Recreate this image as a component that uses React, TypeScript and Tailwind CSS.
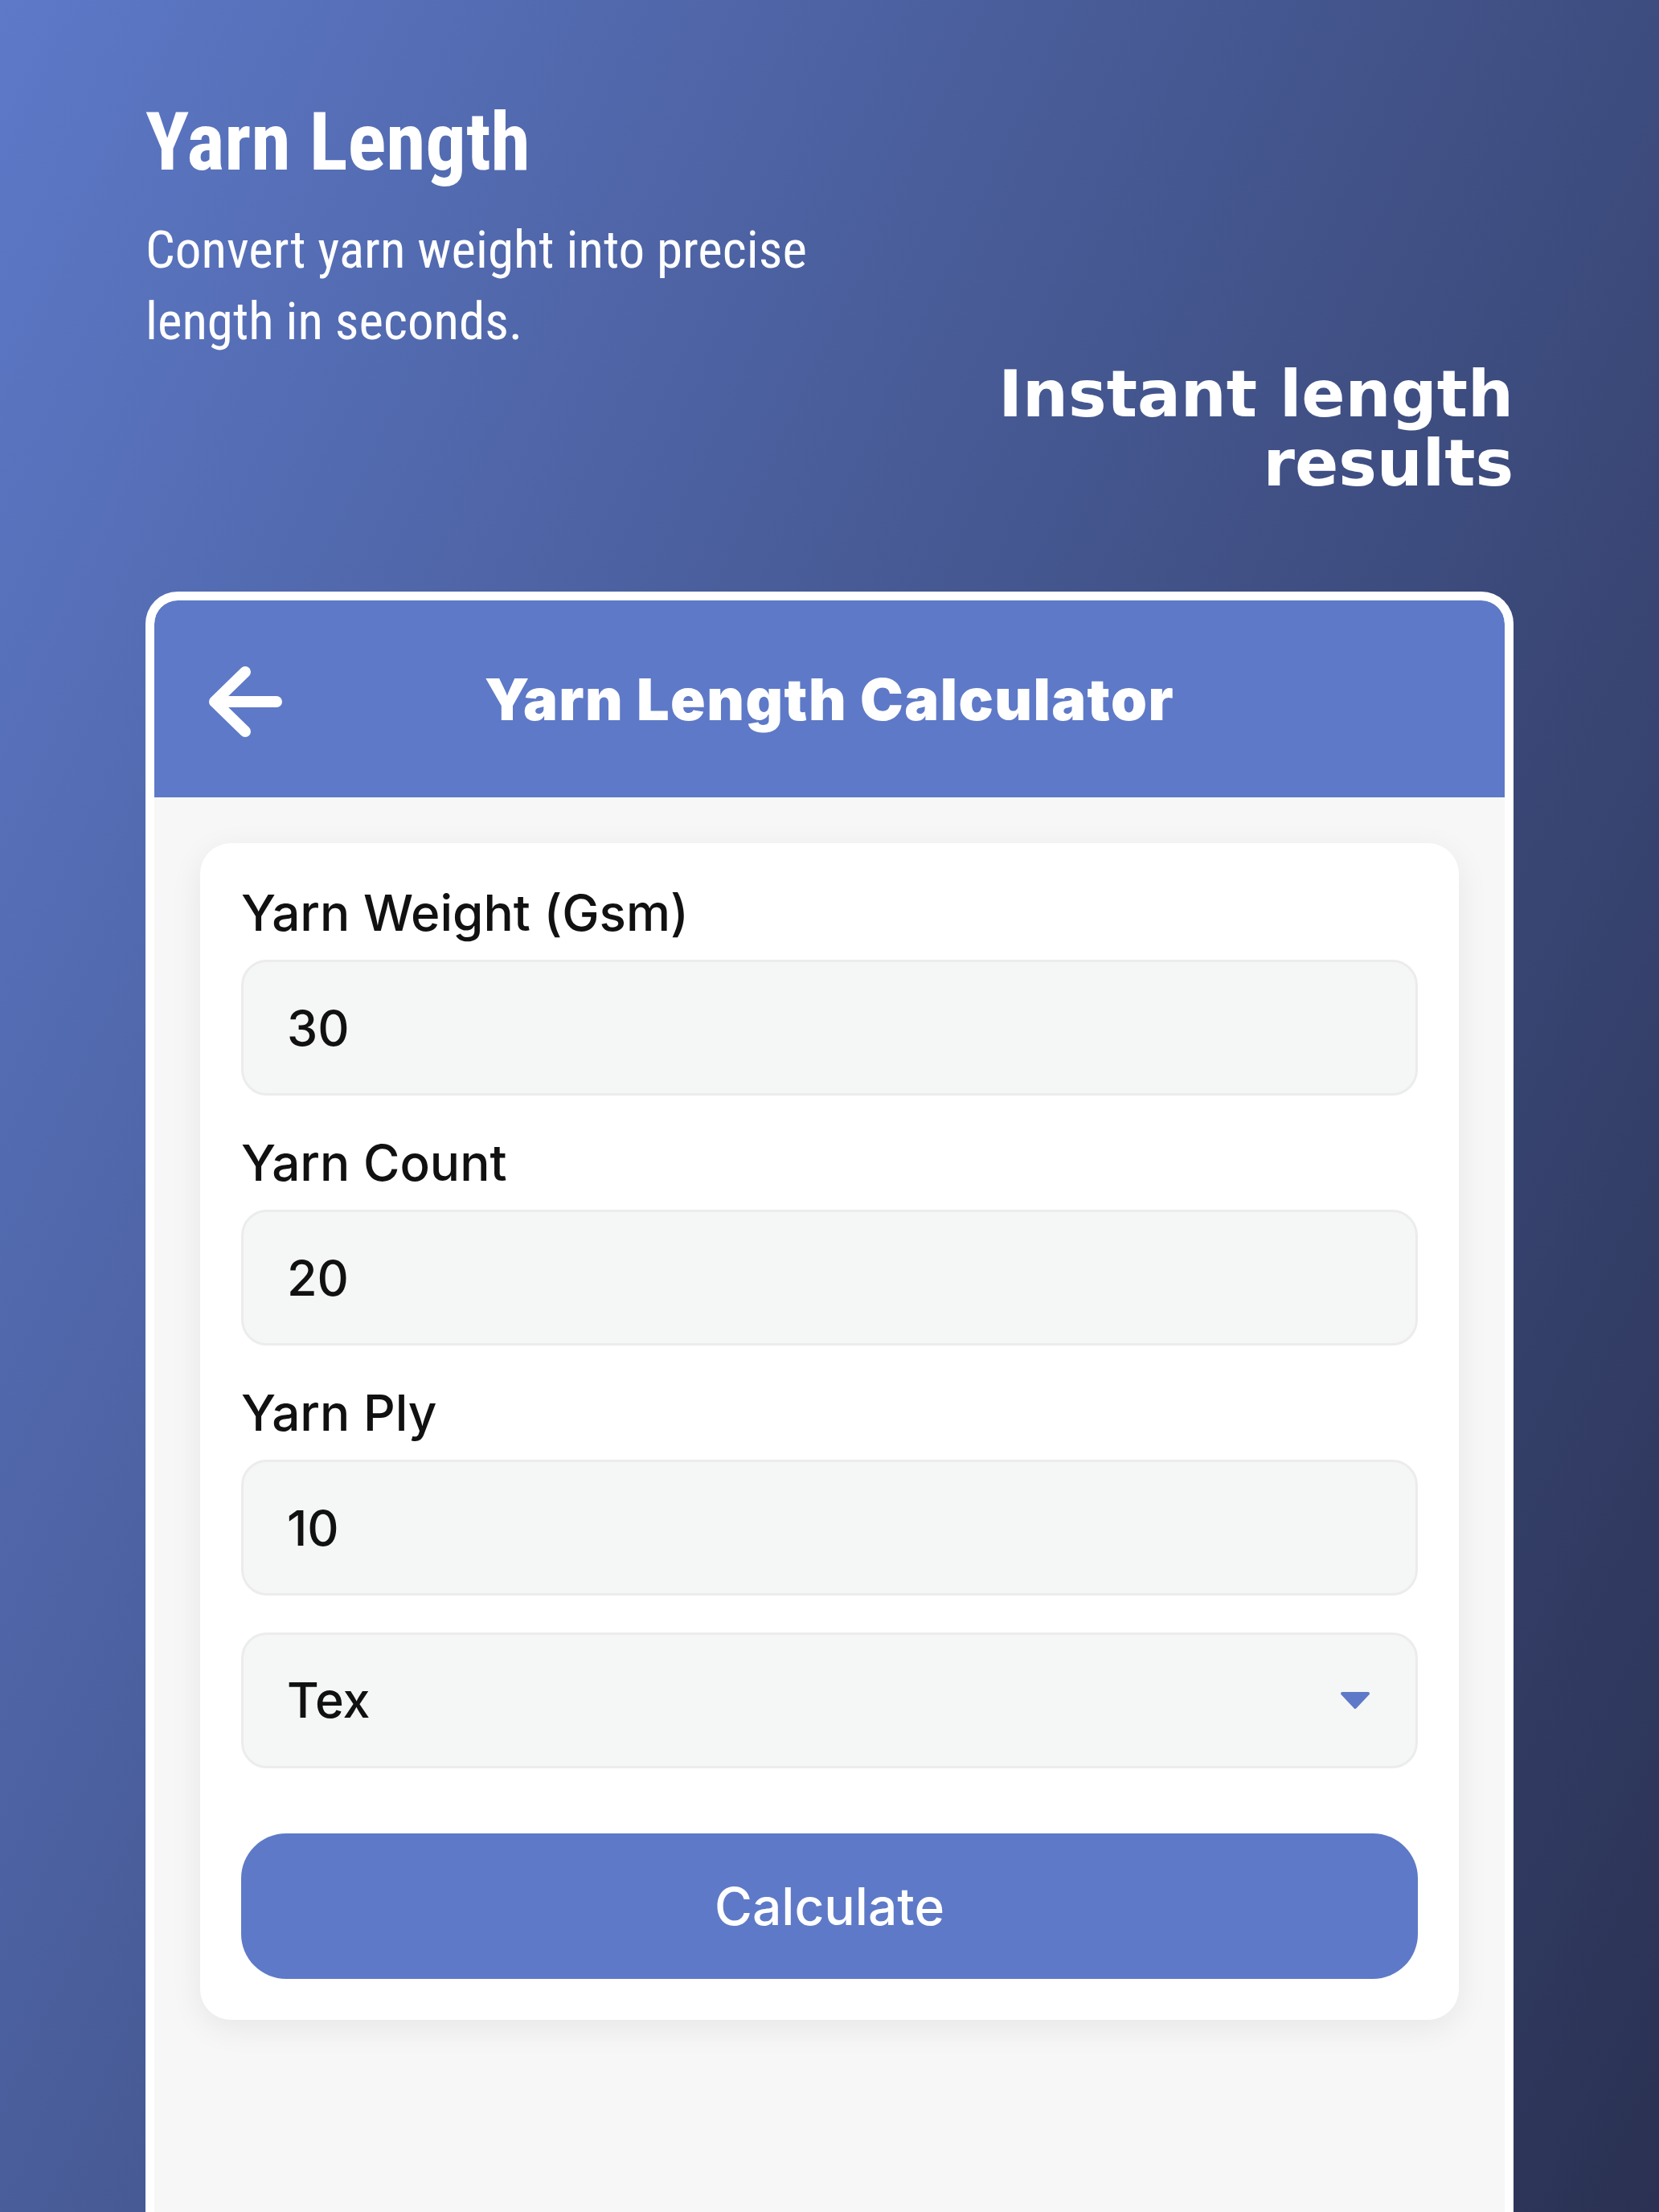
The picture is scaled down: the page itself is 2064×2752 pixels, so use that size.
import React from 'react';

const condensed = { fontFamily: '"Roboto Condensed", "Liberation Sans Narrow", "DejaVu Sans Condensed", Roboto, sans-serif' };
const heavy = { fontFamily: '"DejaVu Sans", "Liberation Sans", sans-serif' };
const ui = { fontFamily: 'Inter, "Noto Sans", "Liberation Sans", sans-serif' };

const Field: React.FC<{ label: string; value: string; first?: boolean }> = ({ label, value, first }) => (
  <div className={first ? '' : 'mt-[44px]'}>
    <label className="block text-[62px] leading-[80px] font-medium text-[#111]">{label}</label>
    <input
      defaultValue={value}
      className="mt-[18px] block w-full h-[169px] rounded-[32px] border-[3px] border-[#ececec] bg-[#f5f6f6] pl-[54px] text-[61px] font-medium text-[#111] outline-none"
    />
  </div>
);

export default function App() {
  return (
    <div className="w-[2064px] h-[2752px] overflow-hidden flex flex-col bg-linear-[115deg] from-[#5d79c8] to-[#2a3152]">
      {/* Intro copy */}
      <div className="px-[181px] pt-[119px] text-white">
        <h1 style={condensed} className="text-[100px] leading-[116px] font-bold">Yarn Length</h1>
        <p style={condensed} className="mt-[32px] text-[65px] leading-[89px] font-normal">
          Convert yarn weight into precise
          <br />
          length in seconds.
        </p>
        <p style={heavy} className="mt-[3px] text-right text-[80px] leading-[86px] font-bold">
          Instant length
          <br />
          results
        </p>
      </div>

      {/* Phone frame */}
      <div className="mx-[181px] mt-[116px] flex-1 flex flex-col border-[11px] border-b-0 border-white rounded-t-[40px] bg-[#f6f7f6] overflow-hidden">
        <div className="relative h-[245px] shrink-0 bg-[#5e79c7] rounded-t-[29px] flex items-center justify-center">
          <svg
            className="absolute left-[67px] top-[81px]"
            width="100"
            height="90"
            viewBox="0 0 100 90"
            fill="none"
            stroke="white"
            strokeWidth="14"
            strokeLinecap="round"
            strokeLinejoin="round"
          >
            <path d="M46 8 L8 45 L46 82 M8 45 H85" />
          </svg>
          <h2 style={ui} className="text-[72px] font-black tracking-[0.02em] text-white">Yarn Length Calculator</h2>
        </div>

        <div style={ui} className="mx-[57px] mt-[57px] rounded-[38px] bg-white px-[51px] pt-[47px] pb-[51px] shadow-[0_10px_40px_rgba(0,0,0,0.07)]">
          <Field label="Yarn Weight (Gsm)" value="30" first />
          <Field label="Yarn Count" value="20" />
          <Field label="Yarn Ply" value="10" />

          <div className="mt-[46px] h-[169px] rounded-[32px] border-[3px] border-[#ececec] bg-[#f5f6f6] pl-[54px] pr-[55px] flex items-center justify-between">
            <span className="text-[61px] font-medium text-[#111]">Tex</span>
            <svg width="40" height="25" viewBox="0 0 40 25">
              <path d="M4 4 H36 L20 21 Z" fill="#5e79c7" stroke="#5e79c7" strokeWidth="4" strokeLinejoin="round" />
            </svg>
          </div>

          <button className="mt-[81px] w-full h-[181px] rounded-[56px] bg-[#5e79c7] text-white text-[64px] font-medium">
            Calculate
          </button>
        </div>
      </div>
    </div>
  );
}
